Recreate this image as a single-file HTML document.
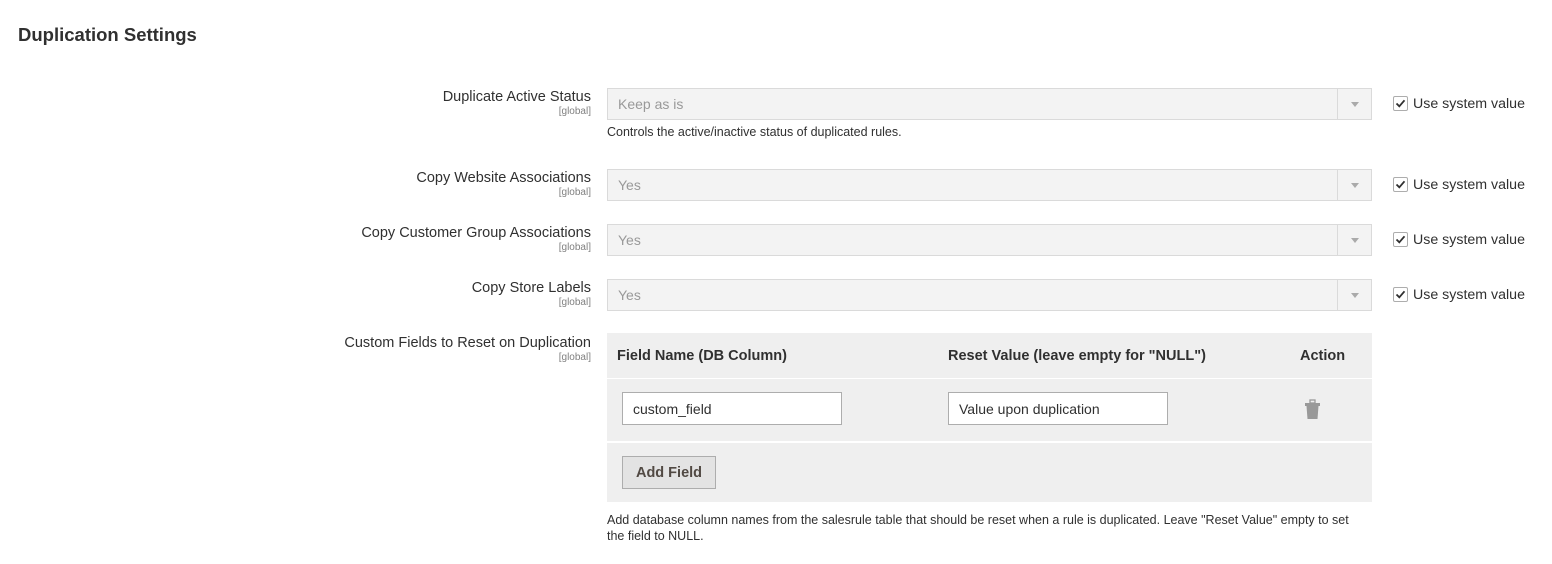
<!DOCTYPE html>
<html><head><meta charset="utf-8"><style>
*{box-sizing:border-box;margin:0;padding:0}
body{width:1552px;height:564px;background:#fff;font-family:"Liberation Sans",sans-serif;color:#303030;position:relative;overflow:hidden}
.a{position:absolute;white-space:nowrap}
.title{left:18px;top:24px;font-size:18.5px;font-weight:bold;color:#303030}
.lbl{right:961px;font-size:14.5px;color:#303030;text-align:right}
.gl{right:961px;font-size:10px;color:#808080}
.sel{left:607px;width:765px;height:32px;background:#f3f3f3;border:1px solid #dadada;font-size:14px;color:#999;padding:7px 10px}
.sel:after{content:"";position:absolute;right:0;top:0;width:33px;height:30px;border-left:1px solid #dadada}
.sel i{position:absolute;right:12px;top:13px;border-left:4px solid transparent;border-right:4px solid transparent;border-top:5px solid #aaa}
.cb{left:1393px;width:15px;height:15px;border:1px solid #adadad;border-radius:2px;background:#fff}
.cb svg{position:absolute;left:1px;top:1px}
.usv{left:1413px;font-size:14.2px;color:#303030}
.help{left:607px;font-size:12.5px;color:#303030}
.th{font-size:14.5px;font-weight:bold;color:#303030}
.inp{height:33px;width:220px;border:1px solid #adadad;background:#fff;font-size:14px;padding:8px 10px;color:#303030}
</style></head><body>
<div class="a title">Duplication Settings</div>

<div class="a lbl" style="top:89px">Duplicate Active Status</div>
<div class="a gl" style="top:106px">[global]</div>
<div class="a sel" style="top:88px">Keep as is<i></i></div>
<div class="a help" style="top:125px">Controls the active/inactive status of duplicated rules.</div>

<div class="a lbl" style="top:170px">Copy Website Associations</div>
<div class="a gl" style="top:187px">[global]</div>
<div class="a sel" style="top:169px">Yes<i></i></div>

<div class="a lbl" style="top:225px">Copy Customer Group Associations</div>
<div class="a gl" style="top:242px">[global]</div>
<div class="a sel" style="top:224px">Yes<i></i></div>

<div class="a lbl" style="top:280px">Copy Store Labels</div>
<div class="a gl" style="top:297px">[global]</div>
<div class="a sel" style="top:279px">Yes<i></i></div>

<div class="a cb" style="top:96px"><svg width="11" height="11" viewBox="0 0 11 11"><path d="M1.5 5.5 L4.3 8.3 L9.5 2.3" stroke="#303030" stroke-width="1.8" fill="none"/></svg></div>
<div class="a usv" style="top:96px">Use system value</div>
<div class="a cb" style="top:177px"><svg width="11" height="11" viewBox="0 0 11 11"><path d="M1.5 5.5 L4.3 8.3 L9.5 2.3" stroke="#303030" stroke-width="1.8" fill="none"/></svg></div>
<div class="a usv" style="top:177px">Use system value</div>
<div class="a cb" style="top:232px"><svg width="11" height="11" viewBox="0 0 11 11"><path d="M1.5 5.5 L4.3 8.3 L9.5 2.3" stroke="#303030" stroke-width="1.8" fill="none"/></svg></div>
<div class="a usv" style="top:232px">Use system value</div>
<div class="a cb" style="top:287px"><svg width="11" height="11" viewBox="0 0 11 11"><path d="M1.5 5.5 L4.3 8.3 L9.5 2.3" stroke="#303030" stroke-width="1.8" fill="none"/></svg></div>
<div class="a usv" style="top:287px">Use system value</div>

<div class="a lbl" style="top:335px">Custom Fields to Reset on Duplication</div>
<div class="a gl" style="top:352px">[global]</div>

<div class="a" style="left:607px;top:333px;width:765px;height:45px;background:#efefef"></div>
<div class="a" style="left:607px;top:379px;width:765px;height:62px;background:#efefef"></div>
<div class="a" style="left:607px;top:443px;width:765px;height:59px;background:#efefef"></div>
<div class="a th" style="left:617px;top:348px">Field Name (DB Column)</div>
<div class="a th" style="left:948px;top:348px">Reset Value (leave empty for "NULL")</div>
<div class="a th" style="left:1300px;top:348px">Action</div>
<div class="a inp" style="left:622px;top:392px">custom_field</div>
<div class="a inp" style="left:948px;top:392px">Value upon duplication</div>
<svg class="a" style="left:1304px;top:399px" width="17" height="21" viewBox="0 0 17 21"><rect x="6" y="1" width="5" height="3" fill="none" stroke="#999" stroke-width="1.3"/><rect x="1" y="4" width="15" height="3" fill="#999"/><path d="M2.5 7 H14.5 L13.5 20 H3.5 Z" fill="#999"/></svg>
<div class="a" style="left:622px;top:456px;width:94px;height:33px;background:#e3e3e3;border:1px solid #adadad;font-size:14.5px;font-weight:bold;color:#514943;text-align:center;line-height:33px">Add Field</div>

<div class="a help" style="top:513px">Add database column names from the salesrule table that should be reset when a rule is duplicated. Leave "Reset Value" empty to set</div>
<div class="a help" style="top:529px">the field to NULL.</div>
</body></html>
